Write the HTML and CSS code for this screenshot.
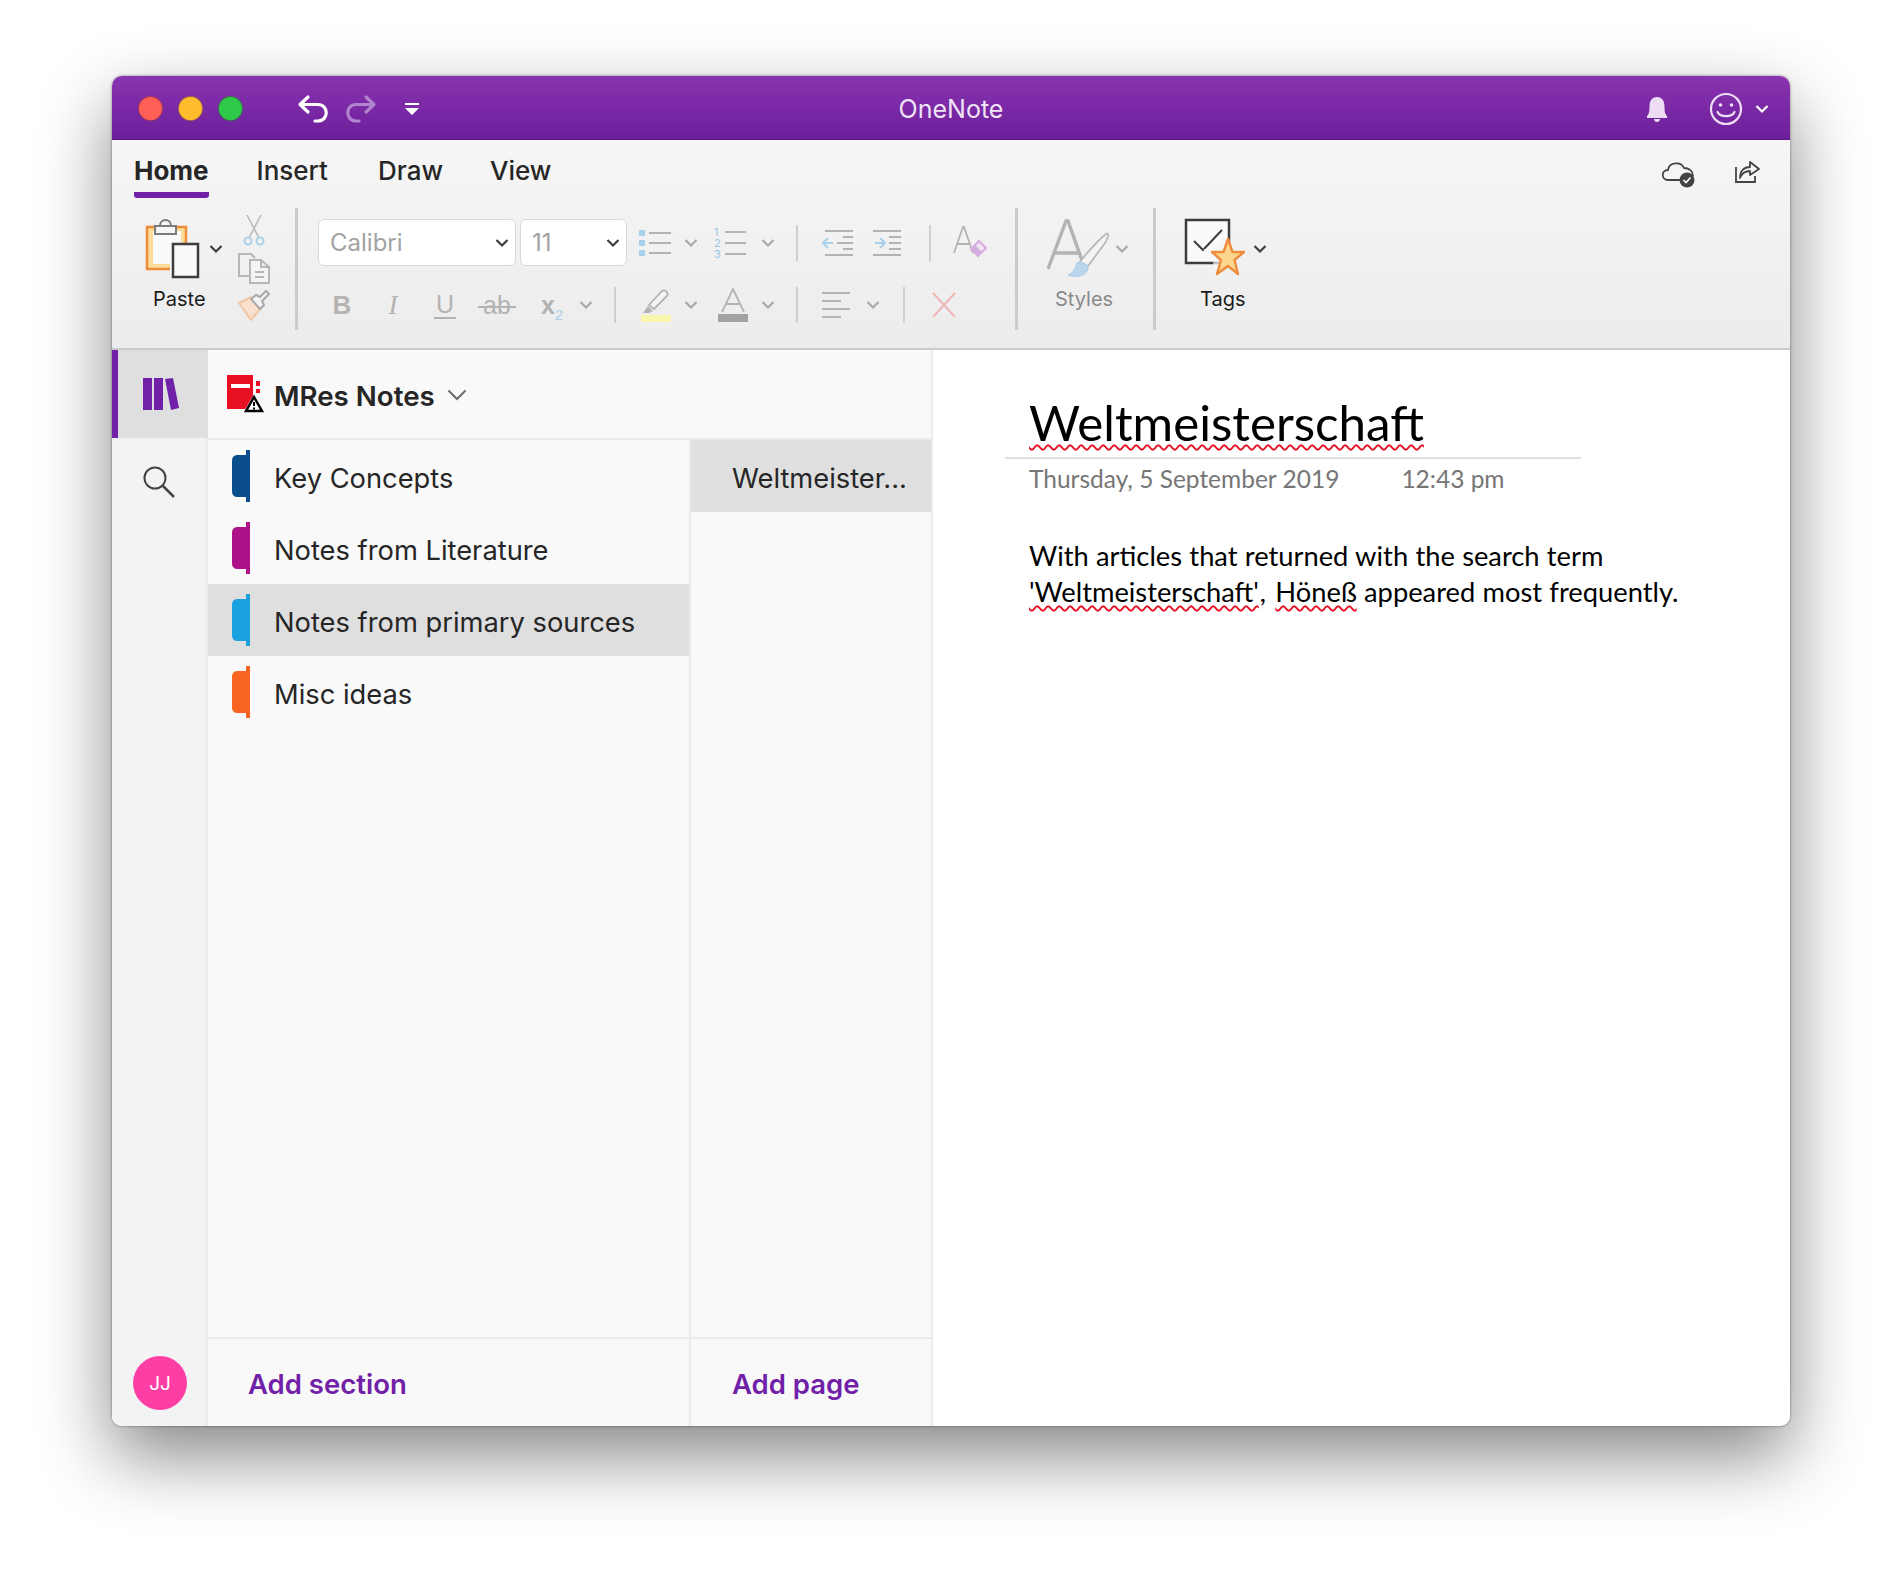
FILE: index.html
```html
<!DOCTYPE html>
<html lang="en">
  <head>
    <meta charset="utf-8">
    <title>OneNote</title>
    <link rel="stylesheet" href="styles.css">
  </head>
  <body>
    <svg class="defs" width="0" height="0">
      <symbol id="chev" viewBox="0 0 14 10"><path d="M1.5 2 7 7.500 12.500 2" fill="none" stroke="currentColor" stroke-width="2.200"/></symbol>
      <symbol id="sec" viewBox="0 0 18 52"><path d="M18 0V52H14V47H6C2 47 0 45 0 41V11C0 7 2 5 6 5H14V0Z" fill="currentColor"/></symbol>
    </svg>

    <div class="window">
      <div class="titlebar">
        <div class="title-left">
          <span class="light red"></span>
          <span class="light yellow"></span>
          <span class="light green"></span>
          <svg class="undo" width="32" height="32" viewBox="0 0 32 32"><path d="M11 4 3 11.500 11 19M3 11.500H21C32 11.500 32 28 21 28H18" fill="none" stroke="#fff" stroke-width="3.200" stroke-linecap="round" stroke-linejoin="round"/></svg>
          <svg class="redo" width="32" height="32" viewBox="0 0 32 32"><path d="M21 4 29 11.500 21 19M29 11.500H11C0 11.500 0 28 11 28H14" fill="none" stroke="#b184cf" stroke-width="3.200" stroke-linecap="round" stroke-linejoin="round"/></svg>
          <svg class="qat" width="16" height="16" viewBox="0 0 16 16"><path d="M1 2H15V4H1ZM1 7H15L8 14Z" fill="#fff"/></svg>
        </div>
        <div class="title-text">OneNote</div>
        <div class="title-right">
          <svg width="26" height="30" viewBox="0 0 26 30"><path d="M3 22C5 20 5.500 18 5.500 12 5.500 6 9 3 13 3S20.500 6 20.500 12C20.500 18 21 20 23 22V24H3ZM10 25H16C16 29 10 29 10 25Z" fill="#ecdcf4"/></svg>
          <svg class="smiley" width="34" height="34" viewBox="0 0 34 34"><circle cx="17" cy="17" r="15" fill="none" stroke="#ecdcf4" stroke-width="2.200"/><circle cx="11.500" cy="13" r="1.800" fill="#ecdcf4"/><circle cx="22.500" cy="13" r="1.800" fill="#ecdcf4"/><path d="M8.500 20C11 25.500 23 25.500 25.500 20" fill="none" stroke="#ecdcf4" stroke-width="2.200" stroke-linecap="round"/></svg>
          <svg class="chev white" width="14" height="10"><use href="#chev"/></svg>
        </div>
      </div>

      <div class="ribbon">
        <div class="tabs">
          <div class="tab active">Home</div>
          <div class="tab">Insert</div>
          <div class="tab tab-draw">Draw</div>
          <div class="tab">View</div>
          <div class="tab-actions">
            <svg width="36" height="30" viewBox="0 0 36 30"><path d="M22 22H8C1 22 1 12 8 12 9 4 21 3 24 10 29 10 33 13 33 18" fill="none" stroke="#444" stroke-width="1.800"/><circle cx="27" cy="22" r="7.500" fill="#444"/><path d="M23.500 22 26 24.500 30.500 19.500" fill="none" stroke="#fff" stroke-width="1.600"/></svg>
            <svg width="26" height="26" viewBox="0 0 26 26"><path d="M2 9V24H21V18" fill="none" stroke="#444" stroke-width="1.800"/><path d="M6 20C6 13 10 9 16 9V4L25 11 16 17V13C11 13 8 15 6 20Z" fill="none" stroke="#444" stroke-width="1.800" stroke-linejoin="round"/></svg>
          </div>
        </div>

        <div class="tools">
          <div class="group paste-group">
            <div class="big-tool">
              <svg class="big-icon" width="56" height="60" viewBox="0 0 56 60">
                <path d="M2 8H41V50H2Z" fill="#fbdc98" stroke="#ef8c3c" stroke-width="2.500"/>
                <path d="M8 12H36V45H8Z" fill="#fafafa"/>
                <path d="M10 7H31V15H10ZM15 7C15 -1 26 -1 26 7" fill="#f6f6f6" stroke="#7b7b7b" stroke-width="2"/>
                <path d="M25 24H54V59H25Z" fill="#f6f6f6"/>
                <path d="M28 25H53V58H28Z" fill="#fafafa" stroke="#3d3d3d" stroke-width="2.500"/>
              </svg>
              <svg class="chev dark" width="14" height="10"><use href="#chev"/></svg>
              <div class="big-label paste-label">Paste</div>
            </div>
            <div class="small-stack">
              <svg width="24" height="34" viewBox="0 0 24 34"><path d="M5 2 16.500 24M19 2 7.500 24" fill="none" stroke="#b7b7b7" stroke-width="1.500"/><circle cx="6" cy="28" r="3.500" fill="none" stroke="#a9d0ea" stroke-width="2"/><circle cx="18" cy="28" r="3.500" fill="none" stroke="#a9d0ea" stroke-width="2"/></svg>
              <svg width="34" height="32" viewBox="0 0 34 32"><path d="M12 24H2V2H14L18 6" fill="none" stroke="#b7b7b7" stroke-width="2"/><path d="M13 8H24L32 15V31H13ZM24 8V15H32M18 20H27M18 25H27" fill="#f4f4f4" stroke="#b7b7b7" stroke-width="2"/></svg>
              <svg width="34" height="32" viewBox="0 0 34 32"><path d="M2 14 14 8 23 20 14 31Z" fill="#f8e0cc" stroke="#f0c8a6" stroke-width="2"/><path d="M14 10 23 20 27 16 25 12 32 5 29 2 23 8 19 6Z" fill="#f4f4f4" stroke="#a8a8a8" stroke-width="2"/></svg>
            </div>
          </div>

          <div class="group format-group">
            <div class="format-row row-top">
              <div class="select font-select"><span>Calibri</span><svg class="chev dark" width="14" height="10"><use href="#chev"/></svg></div>
              <div class="select size-select"><span>11</span><svg class="chev dark" width="14" height="10"><use href="#chev"/></svg></div>
              <svg width="32" height="30" viewBox="0 0 32 30"><path d="M0 2H6V8H0ZM0 12H6V18H0ZM0 22H6V28H0Z" fill="#a9d0ea"/><path d="M10 5H32M10 15H32M10 25H32" stroke="#b3b3b3" stroke-width="2"/></svg>
              <svg class="chev" width="14" height="10"><use href="#chev"/></svg>
              <svg width="36" height="42" viewBox="-2 -5 36 42"><path d="M11 5H32M11 16H32M11 27H32" stroke="#b3b3b3" stroke-width="2"/><text class="list-num" x="0" y="9">1</text><text class="list-num" x="0" y="20">2</text><text class="list-num" x="0" y="31">3</text></svg>
              <svg class="chev" width="14" height="10"><use href="#chev"/></svg>
              <div class="sep"></div>
              <svg width="32" height="30" viewBox="0 0 32 30"><path d="M4 3H32M16 15H32M22 9H32M22 21H32M4 27H32" stroke="#b3b3b3" stroke-width="2"/><path d="M12 15H2M7 10 2 15 7 20" fill="none" stroke="#a9d0ea" stroke-width="2"/></svg>
              <svg width="32" height="30" viewBox="0 0 32 30"><path d="M0 3H28M16 15H28M16 9H28M16 21H28M0 27H28" stroke="#b3b3b3" stroke-width="2"/><path d="M2 15H12M7 10 12 15 7 20" fill="none" stroke="#a9d0ea" stroke-width="2"/></svg>
              <div class="sep"></div>
              <svg width="34" height="36" viewBox="0 0 34 36"><path d="M1 28 10 2H11L20 28M5 19H16" fill="none" stroke="#b3b3b3" stroke-width="1.800"/><path d="M26 16 33 23 25 31 18 24Z" fill="#f1e3f5" stroke="#d3aede" stroke-width="2"/><path d="M18 24 22 20 29 27 25 31Z" fill="#d3aede"/></svg>
            </div>
            <div class="format-row row-bottom">
              <div class="glyph bold">B</div>
              <div class="glyph italic">I</div>
              <div class="glyph under">U</div>
              <div class="glyph strike">ab</div>
              <div class="glyph sub">x<sub>2</sub></div>
              <svg class="chev" width="14" height="10"><use href="#chev"/></svg>
              <div class="sep"></div>
              <svg width="30" height="34" viewBox="0 0 30 34"><path d="M8 17 21 3C24 1 28 5 26 8L13 21Z" fill="#f4f4f4" stroke="#b3b3b3" stroke-width="1.800"/><path d="M7 18 12 23 8 25H2Z" fill="#b3b3b3"/><rect y="27" width="30" height="7" fill="#fbf6ae"/></svg>
              <svg class="chev" width="14" height="10"><use href="#chev"/></svg>
              <svg width="30" height="34" viewBox="0 0 30 34"><path d="M4 24 15 1 26 24M8 16H22" fill="none" stroke="#b3b3b3" stroke-width="1.800"/><rect y="26" width="30" height="8" fill="#a2a2a2"/></svg>
              <svg class="chev" width="14" height="10"><use href="#chev"/></svg>
              <div class="sep"></div>
              <svg width="30" height="30" viewBox="0 0 30 30"><path d="M0 3H28M0 11H19M0 19H28M0 27H19" stroke="#b3b3b3" stroke-width="2"/></svg>
              <svg class="chev" width="14" height="10"><use href="#chev"/></svg>
              <div class="sep"></div>
              <svg width="26" height="26" viewBox="0 0 26 26"><path d="M2 1 24 25M24 1 2 25" stroke="#f0b6b6" stroke-width="2"/></svg>
            </div>
          </div>

          <div class="group styles-group">
            <div class="big-tool">
              <svg class="big-icon" width="64" height="60" viewBox="0 0 64 60">
                <path d="M1 50 19 2H21L38 50M8 34H32" fill="none" stroke="#b3b3b3" stroke-width="3.400"/>
                <path d="M32 44C40 34 50 22 59 15 63 13 61 19 58 24 52 32 47 39 41 47Z" fill="#f4f4f4" stroke="#b9b9b9" stroke-width="1.800"/>
                <path d="M30 44C34 42 39 44 41 48 42 55 31 60 21 56 27 54 28 49 30 44Z" fill="#b9d6ee" stroke="#a9cbe6" stroke-width="1"/>
              </svg>
              <svg class="chev" width="14" height="10"><use href="#chev"/></svg>
              <div class="big-label muted styles-label">Styles</div>
            </div>
          </div>

          <div class="group tags-group">
            <div class="big-tool">
              <svg class="big-icon" width="62" height="62" viewBox="0 0 62 62">
                <path d="M2 2H45V45H2Z" fill="#fafafa" stroke="#3d3d3d" stroke-width="2.500"/>
                <path d="M10 23 19 32 38 12" fill="none" stroke="#3d3d3d" stroke-width="2"/>
                <path d="M42 19 48 35 62 35 52 45 56 61 42 52 30 61 33 45 22 35 36 35Z" fill="#f5f5f5" transform="translate(-3 -4)" opacity=".7"/>
                <path d="M44 21 48.500 34H60L50.500 42 54 56 44 48 33 56 37 42 28 34H39.500Z" fill="#fbd78d" stroke="#ef8c3c" stroke-width="2.400" stroke-linejoin="round"/>
              </svg>
              <svg class="chev dark" width="14" height="10"><use href="#chev"/></svg>
              <div class="big-label tags-label">Tags</div>
            </div>
          </div>
        </div>
      </div>

      <div class="main">
        <div class="rail">
          <div class="rail-item active">
            <svg width="36" height="32" viewBox="0 0 36 32"><path d="M0 0H9V32H0ZM11 0H20V32H11ZM22 1 30 0 36 30 28 32Z" fill="#7120a8"/></svg>
          </div>
          <div class="rail-item">
            <svg width="34" height="34" viewBox="0 0 34 34"><circle cx="13" cy="13" r="10.500" fill="none" stroke="#444" stroke-width="2"/><path d="M20.500 20.500 32 32" stroke="#444" stroke-width="2.500"/></svg>
          </div>
          <div class="avatar">JJ</div>
        </div>

        <div class="notebook">
          <div class="notebook-head">
            <svg width="38" height="38" viewBox="0 0 38 38"><path d="M0 0H26V34H0Z" fill="#e81123"/><path d="M4 9H23V13H4Z" fill="#fff"/><path d="M29 6H33V11H29ZM29 14H33V18H29Z" fill="#e81123"/><path d="M27 19 38 38H16Z" fill="#fff"/><path d="M27 22 35 36H19Z" fill="#fff" stroke="#000" stroke-width="2.500"/><path d="M26 27H28V31H26ZM26 32.500H28V34.500H26Z" fill="#000"/></svg>
            <span class="notebook-name">MRes Notes</span>
            <svg class="chev-head" width="20" height="12" viewBox="0 0 20 12"><path d="M1.500 1.500 10 10 18.500 1.500" fill="none" stroke="#6a6a6a" stroke-width="2"/></svg>
          </div>
          <div class="lists">
            <div class="sections">
              <div class="row">
                <svg class="sec-tab blue" width="18" height="52"><use href="#sec"/></svg>
                <span>Key Concepts</span>
              </div>
              <div class="row">
                <svg class="sec-tab magenta" width="18" height="52"><use href="#sec"/></svg>
                <span>Notes from Literature</span>
              </div>
              <div class="row selected">
                <svg class="sec-tab cyan" width="18" height="52"><use href="#sec"/></svg>
                <span>Notes from primary sources</span>
              </div>
              <div class="row">
                <svg class="sec-tab orange" width="18" height="52"><use href="#sec"/></svg>
                <span>Misc ideas</span>
              </div>
              <div class="add section-add">Add section</div>
            </div>
            <div class="pages">
              <div class="row page-row selected"><span>Weltmeister...</span></div>
              <div class="add page-add">Add page</div>
            </div>
          </div>
        </div>

        <div class="page">
          <h1 class="page-title"><span class="typo">Weltmeisterschaft</span></h1>
          <div class="page-meta">
            <span class="page-date">Thursday, 5 September 2019</span>
            <span>12:43 pm</span>
          </div>
          <p class="page-body">With articles that returned with the search term<br><span class="typo">'Weltmeisterschaft'</span><span class="comma">,</span> <span class="typo">Höneß</span> appeared most frequently.</p>
        </div>
      </div>
    </div>
  </body>
</html>
```

FILE: styles.css
```css
* {
  box-sizing: border-box;
}
html, body {
  margin: 0;
  height: 1574px;
  overflow: hidden;
  background: #fff;
}
body {
  padding: 76px 0 0 112px;
  font-family: "Inter", "Liberation Sans", sans-serif;
  color: #262626;
}
.defs {
  display: block;
  height: 0;
}
.window {
  width: 1678px;
  height: 1350px;
  border-radius: 10px;
  display: flex;
  flex-direction: column;
  overflow: hidden;
  box-shadow: 0 30px 72px rgba(0, 0, 0, .48), 0 0 3px rgba(0, 0, 0, .45);
}

/* title bar */
.titlebar {
  height: 64px;
  flex: none;
  display: grid;
  grid-template-columns: 1fr auto 1fr;
  align-items: center;
  background: linear-gradient(#8933b0, #6c1f9b);
  border-bottom: 1px solid #5b1a86;
}
.title-left {
  display: flex;
  align-items: center;
  padding: 2px 0 0 26px;
}
.light {
  width: 25px;
  height: 25px;
  border-radius: 50%;
  margin-right: 15px;
  border: 1px solid rgba(70, 20, 90, .5);
}
.red { background: #ff5f57; }
.yellow { background: #ffbd2e; }
.green { background: #2fc94a; }
.undo { margin-left: 39px; }
.redo { margin-left: 16px; }
.qat { margin-left: 27px; }
.title-text {
  font-size: 25px;
  padding-top: 2px;
  color: #efe3f5;
}
.title-right {
  display: flex;
  align-items: center;
  justify-content: flex-end;
  padding: 2px 21px 0 0;
}
.smiley { margin-left: 39px; margin-right: 12px; }
.chev { color: #a9a9a9; }
.chev.dark { color: #3d3d3d; }
.chev.white { color: #fff; }

/* ribbon */
.ribbon {
  height: 210px;
  flex: none;
  background: linear-gradient(#f6f6f6, #ececec);
  border-bottom: 2px solid #cbcbcb;
}
.tabs {
  height: 68px;
  display: flex;
  align-items: flex-start;
  padding-left: 22px;
}
.tab {
  font-size: 26px;
  line-height: 31px;
  margin-top: 15px;
  margin-right: 50px;
  padding-bottom: 6px;
  color: #262626;
  font-weight: 500;
}
.tab.active {
  font-weight: 700;
  margin-right: 48px;
  border-bottom: 6px solid #7120a8;
  border-radius: 0 0 3px 3px;
}
.tab.tab-draw {
  margin-right: 47px;
}
.tab-actions {
  margin-left: auto;
  padding: 18px 30px 0 0;
  display: flex;
  gap: 38px;
}
.tools {
  display: flex;
  height: 122px;
}
.group {
  border-right: 3px solid #cbcbcb;
  height: 122px;
}
.paste-group {
  width: 186px;
  padding: 11px 0 0 33px;
  display: flex;
}
.big-tool {
  display: grid;
  grid-template-columns: auto auto;
  align-items: center;
  align-content: start;
  justify-content: start;
  justify-items: start;
}
.big-icon {
  display: block;
}
.big-label {
  grid-column: 1 / 3;
  font-size: 20px;
  line-height: 24px;
  margin-top: 8px;
  color: #1b1b1b;
}
.muted {
  color: #8a8a8a;
}
.paste-group .chev { margin-left: 8px; }
.paste-label { margin-left: 8px; }
.small-stack {
  margin-left: 14px;
  margin-top: -6px;
  width: 34px;
  display: flex;
  flex-direction: column;
  align-items: center;
  gap: 5px;
}
.format-group {
  width: 720px;
  padding: 11px 0 0 20px;
}
.format-row {
  display: grid;
  align-items: center;
  justify-items: center;
}
.row-top {
  height: 47px;
  grid-template-columns: 202px 107px 56px 16px 62px 14px 44px 36px 68px 14px 66px;
}
.row-bottom {
  margin-top: 17px;
  height: 44px;
  grid-template-columns: 48px 54px 50px 54px 52px 20px 38px 44px 26px 58px 12px 46px 34px 38px 24px 56px;
}
.select {
  height: 47px;
  background: #fff;
  border: 1px solid #d9d9d9;
  border-radius: 6px;
  display: flex;
  align-items: center;
  justify-content: space-between;
  padding: 0 6px 0 11px;
  font-size: 24px;
  color: #a3a3a3;
}
.font-select { width: 198px; justify-self: start; }
.size-select { width: 107px; }
.sep {
  width: 2px;
  height: 36px;
  background: #cfcfcf;
}
.list-num {
  font: 11px "Inter", sans-serif;
  fill: #96c6e6;
}
.glyph {
  font-size: 25px;
  color: #b3b3b3;
  line-height: 30px;
}
.glyph.bold { font-weight: 700; font-family: "Liberation Sans", sans-serif; font-size: 26px; }
.glyph.italic { font-style: italic; font-family: "Liberation Serif", serif; font-size: 27px; }
.glyph.under {
  border-bottom: 2px solid #b3b3b3;
  font-family: "Liberation Sans", sans-serif;
  line-height: 26px;
  padding: 0 2px;
}
.glyph.strike {
  font-family: "Liberation Sans", sans-serif;
  position: relative;
  padding: 0 1px;
}
.glyph.strike::after {
  content: "";
  position: absolute;
  left: -4px;
  right: -4px;
  top: 16px;
  height: 2px;
  background: #b3b3b3;
}
.glyph.sub {
  font-weight: 700;
  font-family: "Liberation Sans", sans-serif;
  padding-left: 4px;
}
.glyph.sub sub {
  font-size: 15px;
  font-weight: 400;
  color: #a9d0ea;
  line-height: 0;
}
.styles-group {
  width: 138px;
  padding: 11px 0 0 29px;
}
.styles-group .chev { margin-left: 4px; }
.styles-label { margin-left: 8px; }
.tags-group {
  border-right: 0;
  padding: 10px 0 0 28px;
}
.tags-group .chev { margin-left: 7px; }
.tags-label { margin-left: 16px; margin-top: 7px; }

/* body of the window */
.main {
  flex: 1;
  display: flex;
  min-height: 0;
  background: #fff;
}
.rail {
  width: 96px;
  flex: none;
  background: #f3f3f3;
  border-right: 3px solid #ebebeb;
  display: flex;
  flex-direction: column;
  align-items: stretch;
}
.rail-item {
  height: 88px;
  display: flex;
  align-items: center;
  justify-content: center;
}
.rail-item.active {
  width: 96px;
  background: #dfdfdf;
  border-left: 6px solid #7120a8;
  padding-right: 4px;
}
.avatar {
  margin: auto 0 16px 21px;
  width: 54px;
  height: 54px;
  border-radius: 50%;
  background: #ff3ea5;
  color: #fff;
  font-size: 19px;
  display: flex;
  align-items: center;
  justify-content: center;
}
.notebook {
  width: 725px;
  flex: none;
  display: flex;
  flex-direction: column;
  background: #f9f9f9;
  border-right: 2px solid #ebebeb;
}
.notebook-head {
  height: 90px;
  flex: none;
  border-bottom: 2px solid #ececec;
  display: flex;
  align-items: center;
  padding: 0 0 0 19px;
}
.notebook-name {
  margin-left: 9px;
  padding-top: 3px;
  font-size: 27.700px;
  font-weight: 600;
}
.chev-head { margin-left: 12px; margin-top: 2px; }
.lists {
  flex: 1;
  display: flex;
  min-height: 0;
}
.sections {
  width: 483px;
  border-right: 2px solid #ebebeb;
  display: flex;
  flex-direction: column;
}
.pages {
  flex: 1;
  display: flex;
  flex-direction: column;
}
.row {
  height: 72px;
  flex: none;
  display: flex;
  align-items: center;
  font-size: 27.300px;
  padding-left: 24px;
}
.row span {
  padding-top: 5px;
}
.row.selected {
  background: #dfdfdf;
}
.sec-tab { margin-right: 24px; }
.blue { color: #0a4f8c; }
.magenta { color: #ae1289; }
.cyan { color: #1aa1de; }
.orange { color: #f86522; }
.page-row {
  padding-left: 41px;
}
.add {
  margin-top: auto;
  height: 89px;
  flex: none;
  border-top: 2px solid #ebebeb;
  color: #7120a8;
  font-size: 27.500px;
  font-weight: 600;
  display: flex;
  align-items: center;
  padding-top: 2px;
}
.section-add { padding-left: 40px; }
.page-add { padding-left: 41px; }

/* note page */
.page {
  flex: 1;
  padding: 39px 0 0 96px;
  font-family: "Lato", "Carlito", sans-serif;
  color: #000;
}
.page-title {
  margin: 0 0 0 -24px;
  width: 576px;
  padding-left: 24px;
  font-size: 49.300px;
  line-height: 67px;
  font-weight: 400;
  border-bottom: 2px solid #dedede;
  height: 70px;
}
.page-meta {
  margin-top: 5px;
  font-size: 24.500px;
  line-height: 30px;
  color: #767676;
  display: flex;
}
.page-date {
  margin-right: 62px;
}
.page-body {
  margin: 44px 0 0;
  font-size: 27.300px;
  line-height: 36px;
  word-spacing: .3px;
}
.comma {
  margin-left: 1px;
  margin-right: 2px;
}
.typo {
  text-decoration: underline wavy #e81123;
  text-decoration-thickness: 1.500px;
  text-underline-offset: 3px;
}
```
